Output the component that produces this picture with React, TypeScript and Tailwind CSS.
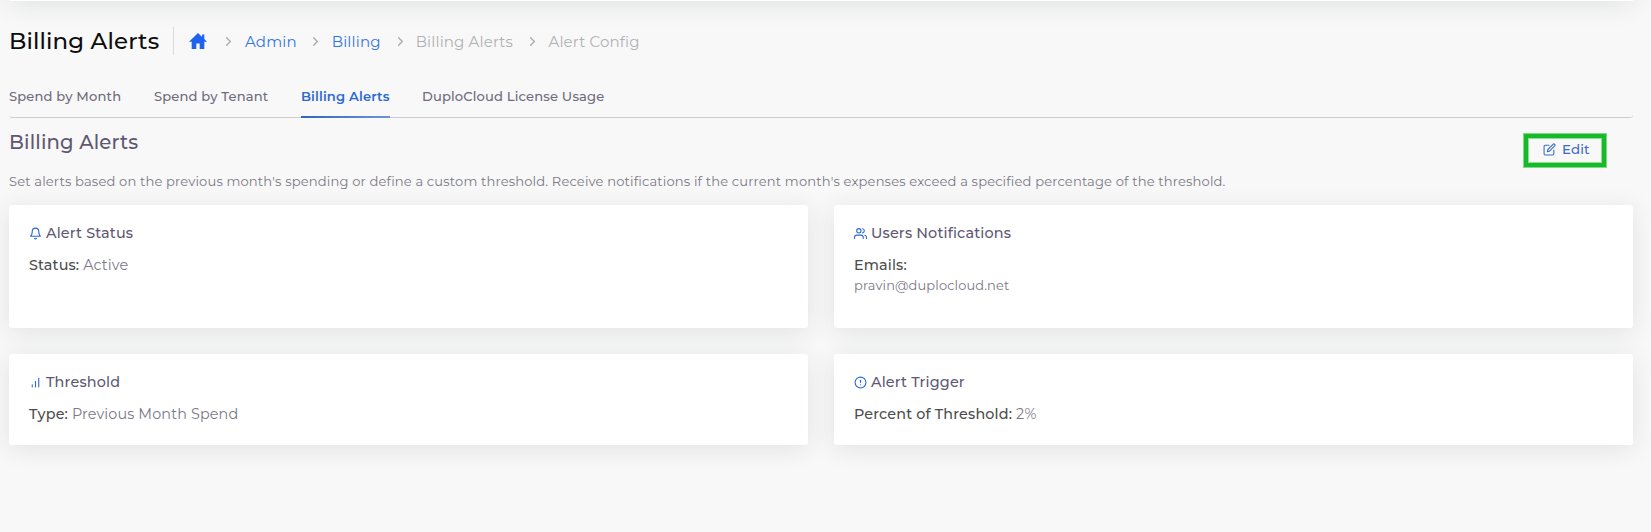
import type { ReactNode } from "react";
import { FiAlertCircle, FiBarChart, FiBell, FiChevronRight, FiEdit, FiUsers } from "react-icons/fi";

function Home() {
  return (
    <svg viewBox="0 0 18 16" className="ml-[15px] h-4 w-[18px] shrink-0 fill-[#1d63f0]">
      <path d="M9 0 0 8.7h2.7V16h4.6v-5.4h3.4V16h4.6V8.7H18L15.3 6.1V1.6h-2.2v2.3z" />
    </svg>
  );
}

function Separator({ className }: { className: string }) {
  return <FiChevronRight size={15} className={`mt-px shrink-0 text-[#a9a9ad] ${className}`} />;
}

const tabs = [
  { label: "Spend by Month", width: "w-[145px]" },
  { label: "Spend by Tenant", width: "w-[147px]" },
  { label: "Billing Alerts", width: "w-[89px]", active: true },
  { label: "DuploCloud License Usage", width: "ml-[32px]" },
];

function Card({ icon, title, height, children }: { icon: ReactNode; title: string; height: string; children: ReactNode }) {
  return (
    <section className={`rounded-[3px] bg-white px-5 pt-[19px] shadow-[0_4px_24px_0_rgba(34,41,47,0.1)] ${height}`}>
      <h3 className="flex h-5 items-center gap-[4px] text-[14.4px] font-medium text-[#5e5873]">
        <span className="pb-px text-[#2a68d2]">{icon}</span>
        {title}
      </h3>
      <div className="mt-[11px] text-[14.35px] leading-5 text-[#7b7885]">{children}</div>
    </section>
  );
}

function Label({ children }: { children: ReactNode }) {
  return <span className="font-medium text-[#4c4c4c]">{children}</span>;
}

export default function App() {
  return (
    <div className="h-[532px] overflow-hidden bg-[#f8f8f8] pr-[18px] pl-[9px] font-['Montserrat','Inter',sans-serif] tracking-[0.15px]">
      <div className="-mt-[79px] h-[80px] bg-white shadow-[0_4px_24px_0_rgba(34,41,47,0.1)]" />

      <header className="mt-[26px] flex h-7 items-center whitespace-nowrap text-[15px]">
        <h1 className="w-[164px] text-[22.9px] leading-7 font-medium text-[#0c0c0c]">Billing Alerts</h1>
        <span className="h-7 w-px bg-[#d6dce1]" />
        <Home />
        <Separator className="ml-[14px]" />
        <a className="ml-[9px] pt-0.5 text-[#3475e4]">Admin</a>
        <Separator className="ml-[11px]" />
        <a className="ml-[9px] pt-0.5 text-[#3475e4]">Billing</a>
        <Separator className="ml-[12px]" />
        <span className="ml-[8px] pt-0.5 text-[#b0b0b4]">Billing Alerts</span>
        <Separator className="ml-[12px]" />
        <span className="ml-[8.5px] pt-0.5 text-[#b0b0b4]">Alert Config</span>
      </header>

      <nav className="mt-[23px] flex h-[40px] rounded-[3px] border-b border-[#cdcdd0] text-[13.1px] whitespace-nowrap text-[#6e6b7b]">
        {tabs.map((t) => (
          <a
            key={t.label}
            className={`flex h-10 flex-col justify-between pt-[8px] leading-5 ${t.width} ${
              t.active ? "font-semibold text-[#2a68d2]" : "font-medium"
            }`}
          >
            {t.label}
            {t.active && <span className="h-0.5 bg-linear-to-r from-[#2f64c4] to-[#6f93d8]" />}
          </a>
        ))}
      </nav>

      <div className="flex h-[53px] justify-between">
        <h2 className="mt-[10px] text-[19.65px] leading-7 font-medium text-[#5e5873]">Billing Alerts</h2>
        <div className="mt-[15px] mr-[26px] h-[35px] w-[84px] border border-[#7ddb86]">
          <button className="flex h-full w-full items-center border-4 border-[#16b929] bg-[#f8f8f8] pb-[2px] pl-[15px] text-[13.3px] font-medium text-[#3a6cc8] inset-ring inset-ring-[#8fdf97]">
            <FiEdit size={13} className="mr-[6px]" />
            Edit
          </button>
        </div>
      </div>
      <p className="h-[34px] text-[13.09px] leading-[21px] whitespace-nowrap text-[#7b7885]">
        Set alerts based on the previous month's spending or define a custom threshold. Receive notifications if the
        current month's expenses exceed a specified percentage of the threshold.
      </p>

      <main className="grid grid-cols-2 gap-[26px]">
        <Card icon={<FiBell size={13} />} title="Alert Status" height="h-[123px]">
          <Label>Status:</Label> Active
        </Card>
        <Card icon={<FiUsers size={13} />} title="Users Notifications" height="h-[123px]">
          <Label>Emails:</Label>
          <div className="text-[12.95px]">pravin@duplocloud.net</div>
        </Card>
        <Card icon={<FiBarChart size={13} />} title="Threshold" height="h-[91px]">
          <Label>Type:</Label> Previous Month Spend
        </Card>
        <Card icon={<FiAlertCircle size={13} />} title="Alert Trigger" height="h-[91px]">
          <Label>Percent of Threshold:</Label> 2%
        </Card>
      </main>
    </div>
  );
}
